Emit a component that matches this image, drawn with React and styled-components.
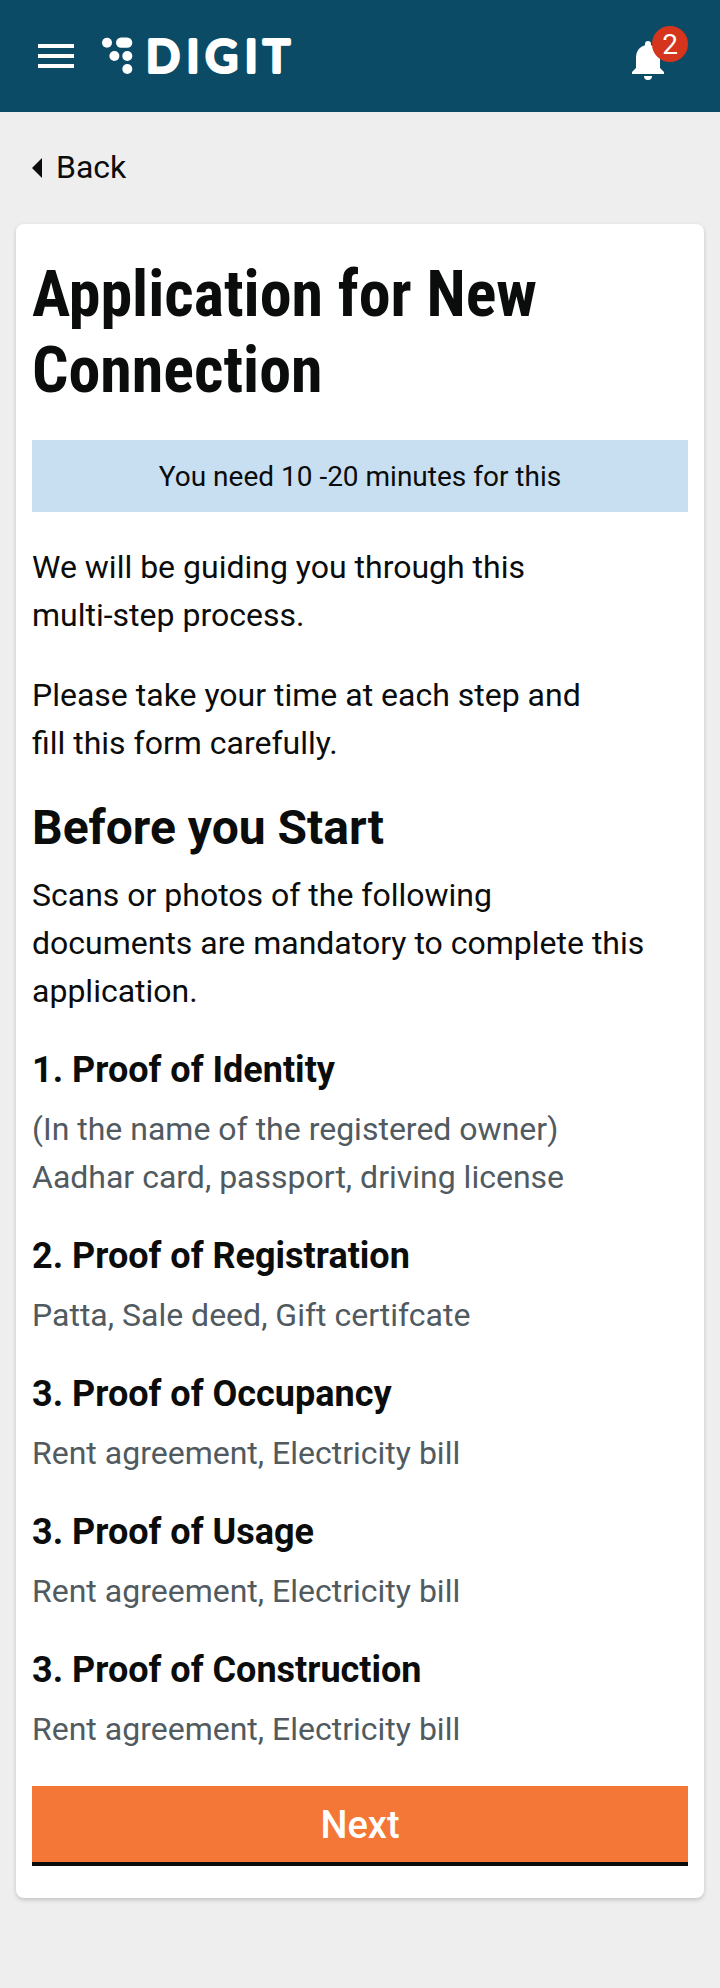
import React from "react";
import styled, { createGlobalStyle } from "styled-components";

const GlobalStyle = createGlobalStyle`
  * { box-sizing: border-box; }
  body {
    margin: 0;
    background: #eeeeee;
    color: #0b0c0c;
    font-family: Roboto, "Liberation Sans", sans-serif;
  }
`;

const Page = styled.div`
  width: 720px;
  min-height: 1988px;
  background: #eeeeee;
`;

const TopBar = styled.header`
  display: flex;
  align-items: center;
  height: 112px;
  padding: 0 32px;
  background: #0b4b66;
`;

const MenuIcon = styled.svg`
  display: block;
  margin-left: 6px;
`;

const Logo = styled.svg`
  display: block;
  margin-left: 26px;
  overflow: visible;
  text {
    font-family: Lato, sans-serif;
    font-size: 44px;
    font-weight: 400;
    fill: #fff;
    stroke: #fff;
    stroke-width: 4.2px;
    stroke-linejoin: round;
  }
`;

const Notifications = styled.div`
  position: relative;
  margin-left: auto;
  width: 56px;
  height: 112px;
`;

const Bell = styled.svg`
  position: absolute;
  left: 0;
  top: 40px;
`;

const Badge = styled.span`
  position: absolute;
  left: 20px;
  top: 26px;
  width: 36px;
  height: 36px;
  border-radius: 50%;
  background: #d4351c;
  color: #fff;
  font-size: 28px;
  line-height: 38px;
  text-align: center;
`;

const BackLink = styled.a`
  display: flex;
  align-items: center;
  gap: 14px;
  height: 112px;
  padding-left: 32px;
  font-size: 32px;
  line-height: 38px;
`;

const BackLabel = styled.span`
  padding-bottom: 2px;
`;

const Card = styled.main`
  height: 1674px;
  margin: 0 16px;
  padding: 33px 16px 32px;
  background: #fff;
  border-radius: 8px;
  box-shadow: 0 2px 4px rgba(0, 0, 0, 0.18);
`;

const Title = styled.h1`
  margin: 0 0 31px;
  font-family: "Roboto Condensed", Roboto, sans-serif;
  font-stretch: 75%;
  font-size: 64px;
  line-height: 76px;
  font-weight: 700;
`;

const Banner = styled.div`
  height: 72px;
  background: #c7dff1;
  font-size: 28px;
  line-height: 73px;
  text-align: center;
`;

const Paragraph = styled.p`
  margin: ${(p) => p.$top || 0}px 0 0;
  font-size: 32px;
  line-height: 48px;
  color: ${(p) => (p.$muted ? "#505a5f" : "#0b0c0c")};
`;

const Subtitle = styled.h2`
  margin: 33px 0 15px;
  font-size: 48px;
  line-height: 56px;
  font-weight: 700;
`;

const DocHeading = styled.h3`
  margin: 34px 0 13px;
  font-size: 36px;
  line-height: 43px;
  font-weight: 700;
`;

const NextButton = styled.button`
  display: block;
  width: 100%;
  height: 80px;
  margin-top: 33px;
  padding: 2px 0 0;
  border: 0;
  border-bottom: 4px solid #0b0c0c;
  background: #f47738;
  color: #fff;
  font: 500 38px/74px Roboto, sans-serif;
`;

const documents = [
  { title: "1. Proof of Identity", lines: ["(In the name of the registered owner)", "Aadhar card, passport, driving license"] },
  { title: "2. Proof of Registration", lines: ["Patta, Sale deed, Gift certifcate"] },
  { title: "3. Proof of Occupancy", lines: ["Rent agreement, Electricity bill"] },
  { title: "3. Proof of Usage", lines: ["Rent agreement, Electricity bill"] },
  { title: "3. Proof of Construction", lines: ["Rent agreement, Electricity bill"] },
];

export default function App() {
  return (
    <Page>
      <GlobalStyle />
      <TopBar>
        <MenuIcon width="36" height="24" viewBox="0 0 36 24" fill="#fff">
          <path d="M0 0h36v4H0zM0 10h36v4H0zM0 20h36v4H0z" />
        </MenuIcon>
        <Logo width="200" height="60" viewBox="0 -10 200 60" fill="#fff">
          <circle cx="7" cy="6.8" r="5" />
          <rect x="16" y="1.5" width="16.3" height="10.3" rx="5.15" />
          <circle cx="14.4" cy="20" r="5" />
          <circle cx="27.3" cy="20" r="5" />
          <circle cx="27.3" cy="33" r="5" />
          <text x="46.2 86.8 105.400 144.9 163.6" y="36.2">DIGIT</text>
        </Logo>
        <Notifications>
          <Bell width="34" height="40" viewBox="0 0 34 40" fill="#fff">
            <path d="M16 40a4 4 0 0 0 4-4h-8a4 4 0 0 0 4 4zM28 28V18c0-6.140-3.280-11.280-9-12.640V4a3 3 0 0 0-6 0v1.360C7.260 6.720 4 11.840 4 18v10l-4 4v2h32v-2z" />
          </Bell>
          <Badge>2</Badge>
        </Notifications>
      </TopBar>
      <BackLink>
        <svg width="10" height="20" viewBox="0 0 10 20" fill="#0b0c0c">
          <path d="M10 0v20L0 10z" />
        </svg>
        <BackLabel>Back</BackLabel>
      </BackLink>
      <Card>
        <Title>Application for New<br />Connection</Title>
        <Banner>You need 10 -20 minutes for this</Banner>
        <Paragraph $top={31}>We will be guiding you through this<br />multi-step process.</Paragraph>
        <Paragraph $top={32}>Please take your time at each step and<br />fill this form carefully.</Paragraph>
        <Subtitle>Before you Start</Subtitle>
        <Paragraph>Scans or photos of the following<br />documents are mandatory to complete this<br />application.</Paragraph>
        {documents.map((doc) => (
          <section key={doc.title}>
            <DocHeading>{doc.title}</DocHeading>
            {doc.lines.map((line) => (
              <Paragraph key={line} $muted>{line}</Paragraph>
            ))}
          </section>
        ))}
        <NextButton>Next</NextButton>
      </Card>
    </Page>
  );
}
